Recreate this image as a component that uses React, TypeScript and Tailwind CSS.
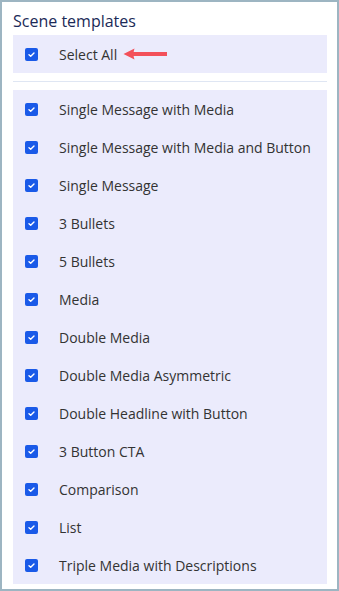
const templates = [
  "Single Message with Media",
  "Single Message with Media and Button",
  "Single Message",
  "3 Bullets",
  "5 Bullets",
  "Media",
  "Double Media",
  "Double Media Asymmetric",
  "Double Headline with Button",
  "3 Button CTA",
  "Comparison",
  "List",
  "Triple Media with Descriptions",
];

function Check() {
  return (
    <span className="flex h-[13px] w-[13px] shrink-0 items-center justify-center rounded-[2px] bg-[#1a5ae8]">
      <svg viewBox="0 0 13 13" className="h-[13px] w-[13px]">
        <path d="M4 6.8 L5.7 8.3 L9 5" fill="none" stroke="#ffffff" strokeWidth="1.4" strokeLinecap="round" strokeLinejoin="round" />
      </svg>
    </span>
  );
}

function Row({ label, children }: { label: string; children?: React.ReactNode }) {
  return (
    <div className="flex h-[38px] items-center pl-[12px]">
      <Check />
      <span className="ml-[21px] text-[14px] text-[#333333]">{label}</span>
      {children}
    </div>
  );
}

export default function App() {
  return (
    <div
      className="h-[591px] w-[339px] border-2 border-[#9db5c2] bg-white pl-[11px] pr-[10px] pt-[7px]"
      style={{ fontFamily: '"Open Sans", "Noto Sans", sans-serif' }}
    >
      <h2 className="mb-[2px] text-[16px] leading-[24px] text-[#1b2a57]">Scene templates</h2>

      <div className="bg-[#ebebfc]">
        <Row label="Select All">
          {/* red callout arrow */}
          <svg viewBox="0 0 44 12" className="ml-[6px] h-[12px] w-[44px]">
            <path d="M0.5 6 L11.5 0.5 Q9.5 6 11.5 11.5 Z" fill="#f3505a" />
            <rect x="10" y="4" width="34" height="4" fill="#f3505a" />
          </svg>
        </Row>
      </div>

      <div className="my-[8px] h-px bg-[#dfe6f3]" />

      <div className="bg-[#ebebfc]">
        {templates.map((t) => (
          <Row key={t} label={t} />
        ))}
      </div>
    </div>
  );
}
